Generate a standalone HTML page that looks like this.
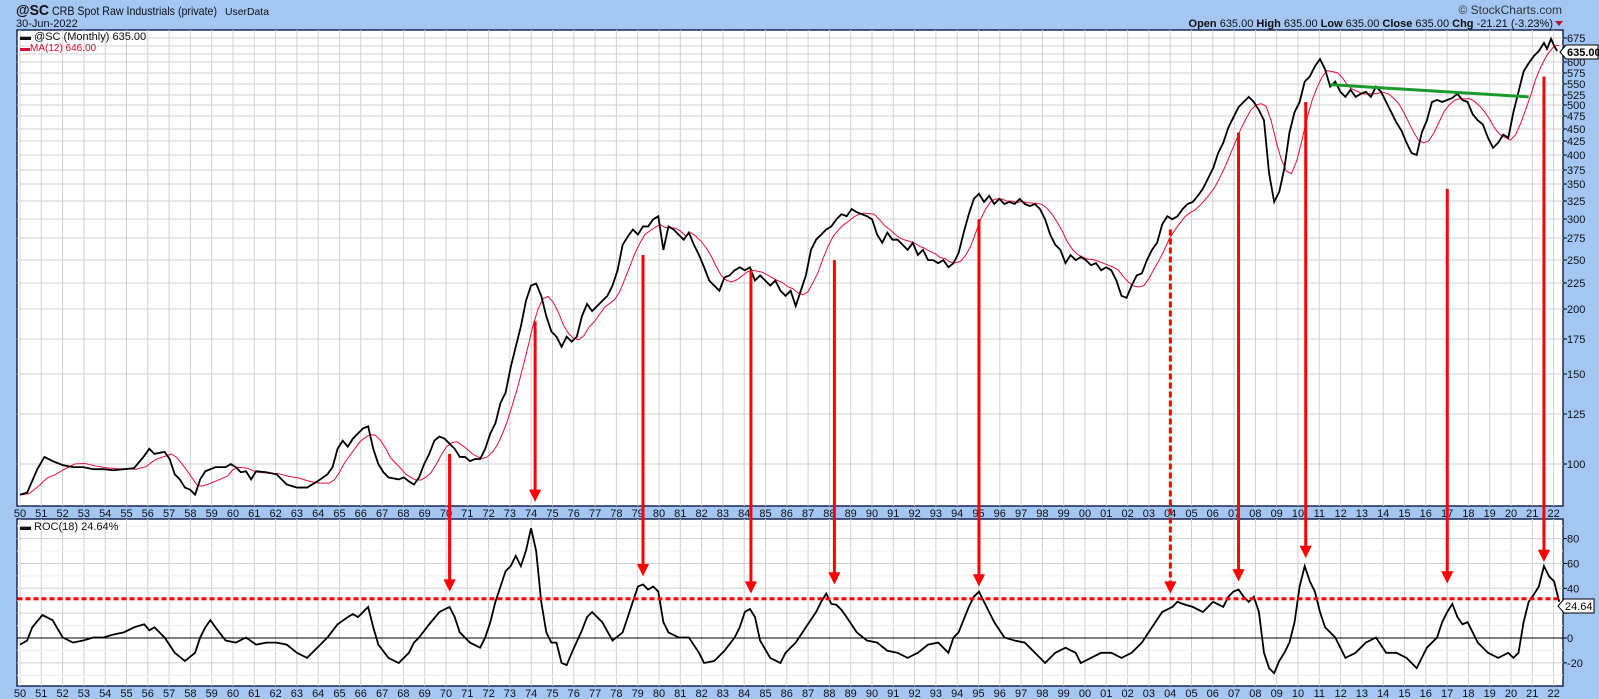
<!DOCTYPE html>
<html><head><meta charset="utf-8"><style>
html,body{margin:0;padding:0;background:#a3c6f2;}
body{width:1599px;height:699px;overflow:hidden;position:relative;font-family:"Liberation Sans",sans-serif;}
svg{position:absolute;left:0;top:0;}
</style></head><body>
<svg id="s" width="1599" height="699" xmlns="http://www.w3.org/2000/svg" font-family="Liberation Sans, sans-serif">
<rect x="0" y="0" width="1599" height="699" fill="#a3c6f2"/>
<text x="16" y="15" font-size="15" font-weight="bold" fill="#111" textLength="33" lengthAdjust="spacingAndGlyphs">@SC</text>
<text x="52" y="15" font-size="12" fill="#111" textLength="165" lengthAdjust="spacingAndGlyphs">CRB Spot Raw Industrials (private)</text>
<text x="225" y="15" font-size="10.5" fill="#111" textLength="44" lengthAdjust="spacingAndGlyphs">UserData</text>
<text x="16" y="27" font-size="11" fill="#111">30-Jun-2022</text>
<text x="1562" y="14" font-size="12" fill="#333" text-anchor="end">© StockCharts.com</text>
<text x="1553" y="27" font-size="11" fill="#111" text-anchor="end"><tspan font-weight="bold">Open</tspan> 635.00 <tspan font-weight="bold">High</tspan> 635.00 <tspan font-weight="bold">Low</tspan> 635.00 <tspan font-weight="bold">Close</tspan> 635.00 <tspan font-weight="bold">Chg</tspan> -21.21 (-3.23%)</text>
<path d="M1555 21 L1563 21 L1559 26 Z" fill="#b0102a"/>
<rect x="17" y="30" width="1546" height="476" fill="#fff" stroke="#1a2650" stroke-width="1.5"/>
<rect x="17" y="519" width="1546" height="167" fill="#fff" stroke="#1a2650" stroke-width="1.5"/>
<line x1="17" y1="506" x2="1563" y2="506" stroke="#1a2650"/>
<line x1="17" y1="519" x2="1563" y2="519" stroke="#1a2650"/>
<g id="grid" stroke="#d0d0d0" stroke-width="1"></g>
<g id="lab" font-size="11" fill="#111"></g>
<line x1="17" y1="638" x2="1563" y2="638" stroke="#000" stroke-width="1"/>
<g transform="translate(1.68,0) scale(1.018,1.02)">
<path id="ma" fill="none" stroke="#e0103a" stroke-width="1" vector-effect="non-scaling-stroke"/>
<path id="px" fill="none" stroke="#000" stroke-width="1.8" vector-effect="non-scaling-stroke"/>
<path id="roc" fill="none" stroke="#000" stroke-width="1.8" vector-effect="non-scaling-stroke"/>
<line x1="1305" y1="83" x2="1500" y2="95" stroke="#1a9a2a" stroke-width="3" vector-effect="non-scaling-stroke"/>
<line x1="15.5" y1="587" x2="1530" y2="587" stroke="#f00" stroke-width="3" stroke-dasharray="5,3" vector-effect="non-scaling-stroke"/>
<g id="arr" fill="#f00" stroke="#f00"></g>
</g>
<text x="20" y="40" font-size="11" fill="#111">▬ @SC (Monthly) 635.00</text>
<text x="20" y="51" font-size="10" fill="#d0103a">▬MA(12) 646.00</text>
<text x="20" y="530" font-size="11" fill="#111">▬ ROC(18) 24.64%</text>
<path d="M1560 52 L1566 45 L1598 45 L1598 59 L1566 59 Z" fill="#fff" stroke="#000"/>
<text x="1567" y="56" font-size="11" font-weight="bold" fill="#000">635.00</text>
<path d="M1558 606 L1564 599 L1594 599 L1594 613 L1564 613 Z" fill="#fff" stroke="#000"/>
<text x="1565" y="610" font-size="11" fill="#000">24.64</text>
</svg>
<script>
var ns="http://www.w3.org/2000/svg";
function el(p,t,a,txt){var e=document.createElementNS(ns,t);for(var k in a)e.setAttribute(k,a[k]);if(txt)e.textContent=txt;document.getElementById(p).appendChild(e);return e;}
for(var y=1950;y<=2022;y++){var x=20+(y-1950)*21.3;
el('grid','line',{x1:x,y1:30,x2:x,y2:506});el('grid','line',{x1:x,y1:519,x2:x,y2:686});
var l=String(y%100).padStart(2,'0');
el('lab','text',{x:x,y:517,'text-anchor':'middle'},l);el('lab','text',{x:x,y:697,'text-anchor':'middle'},l);}
var up=[[675,38],[650,46],[625,54],[600,62],[575,73],[550,84],[525,95],[500,105],[475,116],[450,129],[425,141],[400,155],[375,170],[350,184],[325,201],[300,219],[275,238],[250,260],[225,283],[200,309],[175,339],[150,374],[125,414],[100,464]];
up.forEach(function(v){el('grid','line',{x1:17,y1:v[1],x2:1563,y2:v[1]});el('lab','line',{x1:1563,y1:v[1],x2:1567,y2:v[1],stroke:'#000'});
if(v[0]!=650&&v[0]!=625)el('lab','text',{x:1567,y:v[1]+4},String(v[0]));});
[80,60,40,20,0,-20].forEach(function(v){var yy=638-v*1.2425;el('grid','line',{x1:17,y1:yy,x2:1563,y2:yy});el('lab','line',{x1:1563,y1:yy,x2:1567,y2:yy,stroke:'#000'});if(v!=20)el('lab','text',{x:1567,y:yy+4},String(v));});
[90,70,50,30,10,-10,-30].forEach(function(v){var yy=638-v*1.2425;el('grid','line',{x1:17,y1:yy,x2:1563,y2:yy,stroke:'#ececec'});});
var P=[[18,485],[25,483],[35,460],[42,448],[50,452],[60,456],[70,458],[80,458],[90,460],[100,460],[110,461],[120,460],[130,459],[140,447],[145,440],[150,445],[160,443],[165,450],[170,465],[175,470],[180,478],[185,480],[190,485],[195,470],[200,462],[210,458],[220,458],[225,455],[230,458],[235,463],[240,462],[245,470],[250,462],[260,463],[270,465],[280,475],[290,478],[300,478],[310,472],[320,465],[325,458],[330,440],[335,432],[340,438],[345,430],[350,425],[355,420],[360,418],[365,440],[370,455],[375,463],[380,468],[390,470],[395,468],[400,472],[405,475],[410,468],[415,455],[420,445],[425,432],[430,428],[435,430],[440,435],[445,440],[450,448],[455,448],[460,452],[465,450],[470,450],[475,440],[480,425],[485,415],[490,395],[495,385],[500,360],[505,340],[510,320],[515,295],[520,280],[525,278],[530,290],[535,310],[540,325],[545,330],[550,340],[555,330],[560,335],[565,330],[570,310],[575,298],[580,305],[585,300],[590,295],[595,290],[600,280],[605,265],[610,240],[615,232],[620,225],[625,230],[630,222],[635,222],[640,215],[645,212],[650,245],[655,222],[660,225],[665,230],[670,235],[675,228],[680,240],[685,250],[690,262],[695,275],[700,280],[705,285],[710,272],[715,270],[720,265],[725,262],[730,265],[735,262],[740,275],[745,270],[750,275],[755,280],[760,275],[765,285],[770,290],[775,285],[780,300],[785,285],[790,270],[795,245],[800,235],[805,230],[810,225],[815,222],[820,215],[825,210],[830,212],[835,205],[840,208],[845,210],[850,212],[855,215],[860,230],[865,238],[870,228],[875,235],[880,235],[885,240],[890,245],[895,238],[900,250],[905,245],[910,255],[915,255],[920,258],[925,255],[930,262],[935,258],[940,248],[945,228],[950,210],[955,195],[960,190],[965,198],[970,192],[975,200],[980,195],[985,200],[990,198],[995,200],[1000,195],[1005,200],[1010,202],[1015,200],[1020,205],[1025,215],[1030,230],[1035,240],[1040,245],[1045,258],[1050,250],[1055,255],[1060,252],[1065,255],[1070,260],[1075,258],[1080,265],[1085,262],[1090,265],[1095,275],[1100,290],[1105,292],[1110,280],[1115,270],[1120,268],[1125,255],[1130,245],[1135,238],[1140,220],[1145,212],[1150,215],[1155,212],[1160,205],[1165,200],[1170,198],[1175,192],[1180,185],[1185,175],[1190,165],[1195,150],[1200,140],[1205,125],[1210,115],[1215,105],[1220,100],[1225,95],[1230,100],[1235,108],[1240,118],[1245,170],[1250,198],[1255,188],[1260,165],[1265,130],[1270,110],[1275,100],[1280,80],[1285,75],[1290,65],[1295,58],[1300,68],[1305,85],[1310,80],[1315,90],[1320,95],[1325,88],[1330,95],[1335,92],[1340,90],[1345,95],[1350,85],[1355,90],[1360,100],[1365,110],[1370,120],[1375,128],[1380,140],[1385,150],[1390,152],[1395,130],[1400,118],[1405,100],[1410,98],[1415,100],[1420,98],[1425,96],[1430,92],[1435,98],[1440,100],[1445,112],[1450,118],[1455,122],[1460,135],[1465,145],[1470,140],[1475,132],[1480,135],[1485,110],[1490,90],[1495,70],[1500,62],[1505,55],[1510,50],[1515,42],[1518,48],[1522,38],[1525,45],[1528,50]];
var R=[[18,632],[25,628],[30,615],[40,603],[50,608],[60,625],[70,630],[80,628],[90,625],[100,625],[110,622],[120,620],[130,615],[140,612],[145,618],[150,615],[160,625],[170,640],[180,648],[190,640],[195,625],[200,615],[205,608],[210,615],[220,628],[230,630],[240,625],[250,632],[260,630],[270,630],[280,632],[290,640],[300,645],[310,635],[320,625],[330,612],[340,605],[345,602],[350,605],[355,600],[360,595],[365,615],[370,632],[380,645],[390,650],[400,640],[405,630],[410,625],[420,612],[430,600],[440,595],[445,605],[450,620],[460,630],[470,635],[475,625],[480,610],[485,590],[490,575],[495,560],[500,555],[505,545],[510,555],[515,540],[520,518],[525,540],[530,590],[535,620],[540,630],[545,630],[550,650],[555,652],[560,640],[570,618],[575,605],[580,600],[590,610],[600,628],[610,620],[615,605],[620,590],[625,575],[630,573],[635,578],[640,575],[645,580],[650,610],[655,620],[665,625],[675,625],[685,640],[690,650],[700,648],[710,638],[720,625],[725,615],[730,600],[735,597],[740,605],[745,628],[755,645],[765,650],[770,640],[780,630],[790,615],[800,600],[805,590],[810,582],[815,592],[820,593],[825,598],[830,605],[840,620],[850,628],[860,630],[870,638],[880,640],[890,645],[900,640],[910,632],[920,630],[930,640],[935,625],[940,620],[950,595],[955,585],[960,580],[965,590],[970,600],[975,610],[985,625],[995,628],[1005,630],[1015,640],[1025,650],[1035,640],[1045,635],[1055,640],[1060,650],[1070,645],[1080,640],[1090,640],[1100,645],[1110,640],[1120,630],[1130,615],[1140,600],[1150,595],[1155,590],[1160,592],[1170,595],[1180,600],[1190,590],[1200,595],[1205,585],[1210,580],[1215,578],[1220,585],[1225,590],[1230,585],[1235,600],[1240,640],[1245,655],[1250,660],[1255,648],[1260,640],[1265,630],[1270,610],[1275,575],[1280,555],[1285,570],[1290,580],[1295,600],[1300,615],[1310,625],[1320,645],[1330,640],[1340,630],[1350,625],[1360,640],[1370,640],[1380,645],[1390,655],[1395,645],[1400,635],[1410,625],[1415,610],[1420,600],[1425,592],[1430,605],[1435,612],[1440,610],[1445,620],[1450,630],[1460,640],[1470,645],[1480,640],[1485,645],[1490,640],[1495,610],[1500,590],[1505,583],[1510,575],[1515,555],[1520,565],[1525,570],[1530,590]];
function d(a){return 'M'+a.map(function(p){return p[0]+' '+p[1];}).join(' L');}
document.getElementById('px').setAttribute('d',d(P));
document.getElementById('roc').setAttribute('d',d(R));
var M=[];for(var i=0;i<P.length;i++){var s=0,n=0;for(var j=Math.max(0,i-4);j<=i;j++){s+=P[j][1];n++;}M.push([P[i][0]+2,s/n]);}
document.getElementById('ma').setAttribute('d',d(M));
var A=[[440,445,580],[524,315,492],[630,250,565],[736,265,582],[818,255,573],[960,215,575],[1148,225,582,1],[1215,130,570],[1281,100,547],[1420,185,572],[1515,75,551]];
A.forEach(function(a){var x=a[0];el('arr','line',{x1:x,y1:a[1],x2:x,y2:a[2]-8,'stroke-width':3,'vector-effect':'non-scaling-stroke','stroke-dasharray':a[3]?'6,3':'none'});
el('arr','path',{d:'M'+(x-6)+' '+(a[2]-12)+' L'+(x+6)+' '+(a[2]-12)+' L'+x+' '+a[2]+' Z',stroke:'none'});});
</script>
</body></html>
